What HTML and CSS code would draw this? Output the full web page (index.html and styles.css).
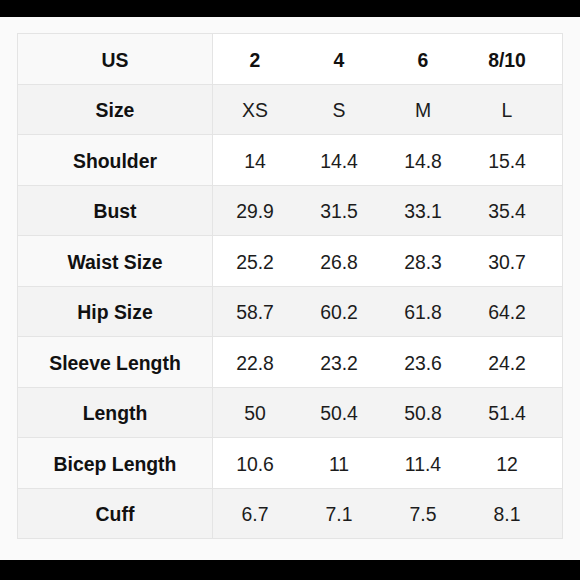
FILE: index.html
```html
<!DOCTYPE html>
<html>
<head>
<meta charset="utf-8">
<link rel="stylesheet" href="styles.css">
</head>
<body>
<div class="frame">
  <div class="sheet">
    <div class="table">
      <div class="row odd"><div class="label">US</div><div class="cell bold">2</div><div class="cell bold">4</div><div class="cell bold">6</div><div class="cell bold">8/10</div><div class="fill"></div></div>
      <div class="row even"><div class="label">Size</div><div class="cell">XS</div><div class="cell">S</div><div class="cell">M</div><div class="cell">L</div><div class="fill"></div></div>
      <div class="row odd"><div class="label">Shoulder</div><div class="cell">14</div><div class="cell">14.4</div><div class="cell">14.8</div><div class="cell">15.4</div><div class="fill"></div></div>
      <div class="row even"><div class="label">Bust</div><div class="cell">29.9</div><div class="cell">31.5</div><div class="cell">33.1</div><div class="cell">35.4</div><div class="fill"></div></div>
      <div class="row odd"><div class="label">Waist Size</div><div class="cell">25.2</div><div class="cell">26.8</div><div class="cell">28.3</div><div class="cell">30.7</div><div class="fill"></div></div>
      <div class="row even"><div class="label">Hip Size</div><div class="cell">58.7</div><div class="cell">60.2</div><div class="cell">61.8</div><div class="cell">64.2</div><div class="fill"></div></div>
      <div class="row odd"><div class="label">Sleeve Length</div><div class="cell">22.8</div><div class="cell">23.2</div><div class="cell">23.6</div><div class="cell">24.2</div><div class="fill"></div></div>
      <div class="row even"><div class="label">Length</div><div class="cell">50</div><div class="cell">50.4</div><div class="cell">50.8</div><div class="cell">51.4</div><div class="fill"></div></div>
      <div class="row odd"><div class="label">Bicep Length</div><div class="cell">10.6</div><div class="cell">11</div><div class="cell">11.4</div><div class="cell">12</div><div class="fill"></div></div>
      <div class="row even"><div class="label">Cuff</div><div class="cell">6.7</div><div class="cell">7.1</div><div class="cell">7.5</div><div class="cell">8.1</div><div class="fill"></div></div>
    </div>
  </div>
</div>
</body>
</html>
```
FILE: styles.css
```css
html, body {
  margin: 0;
  padding: 0;
  background: #000;
}
.frame {
  width: 580px;
  height: 580px;
  padding-top: 17px;
  box-sizing: border-box;
}
.sheet {
  height: 543px;
  background: #fafafa;
  padding: 16px 17px 0 17px;
  box-sizing: border-box;
}
.table {
  width: 546px;
  border: 1px solid #e4e4e4;
  box-sizing: border-box;
  font-family: "Liberation Sans", Arial, sans-serif;
  font-size: 19.4px;
  color: #161616;
}
.row {
  display: grid;
  grid-template-columns: 195px 84px 84px 84px 84px 1fr;
  height: 49.5px;
}
.row + .row {
  border-top: 1px solid #e4e4e4;
}
.row.odd { background: #fff; }
.row.even { background: #f3f3f3; }
.label {
  display: flex;
  align-items: center;
  justify-content: center;
  padding-top: 3px;
  font-weight: bold;
  border-right: 1px solid #e4e4e4;
  color: #111;
}
.row.odd .label { background: #f9f9f9; }
.cell {
  display: flex;
  align-items: center;
  justify-content: center;
  padding-top: 3px;
  color: #1c1c1c;
}
.cell.bold {
  font-weight: bold;
  color: #111;
}
```
